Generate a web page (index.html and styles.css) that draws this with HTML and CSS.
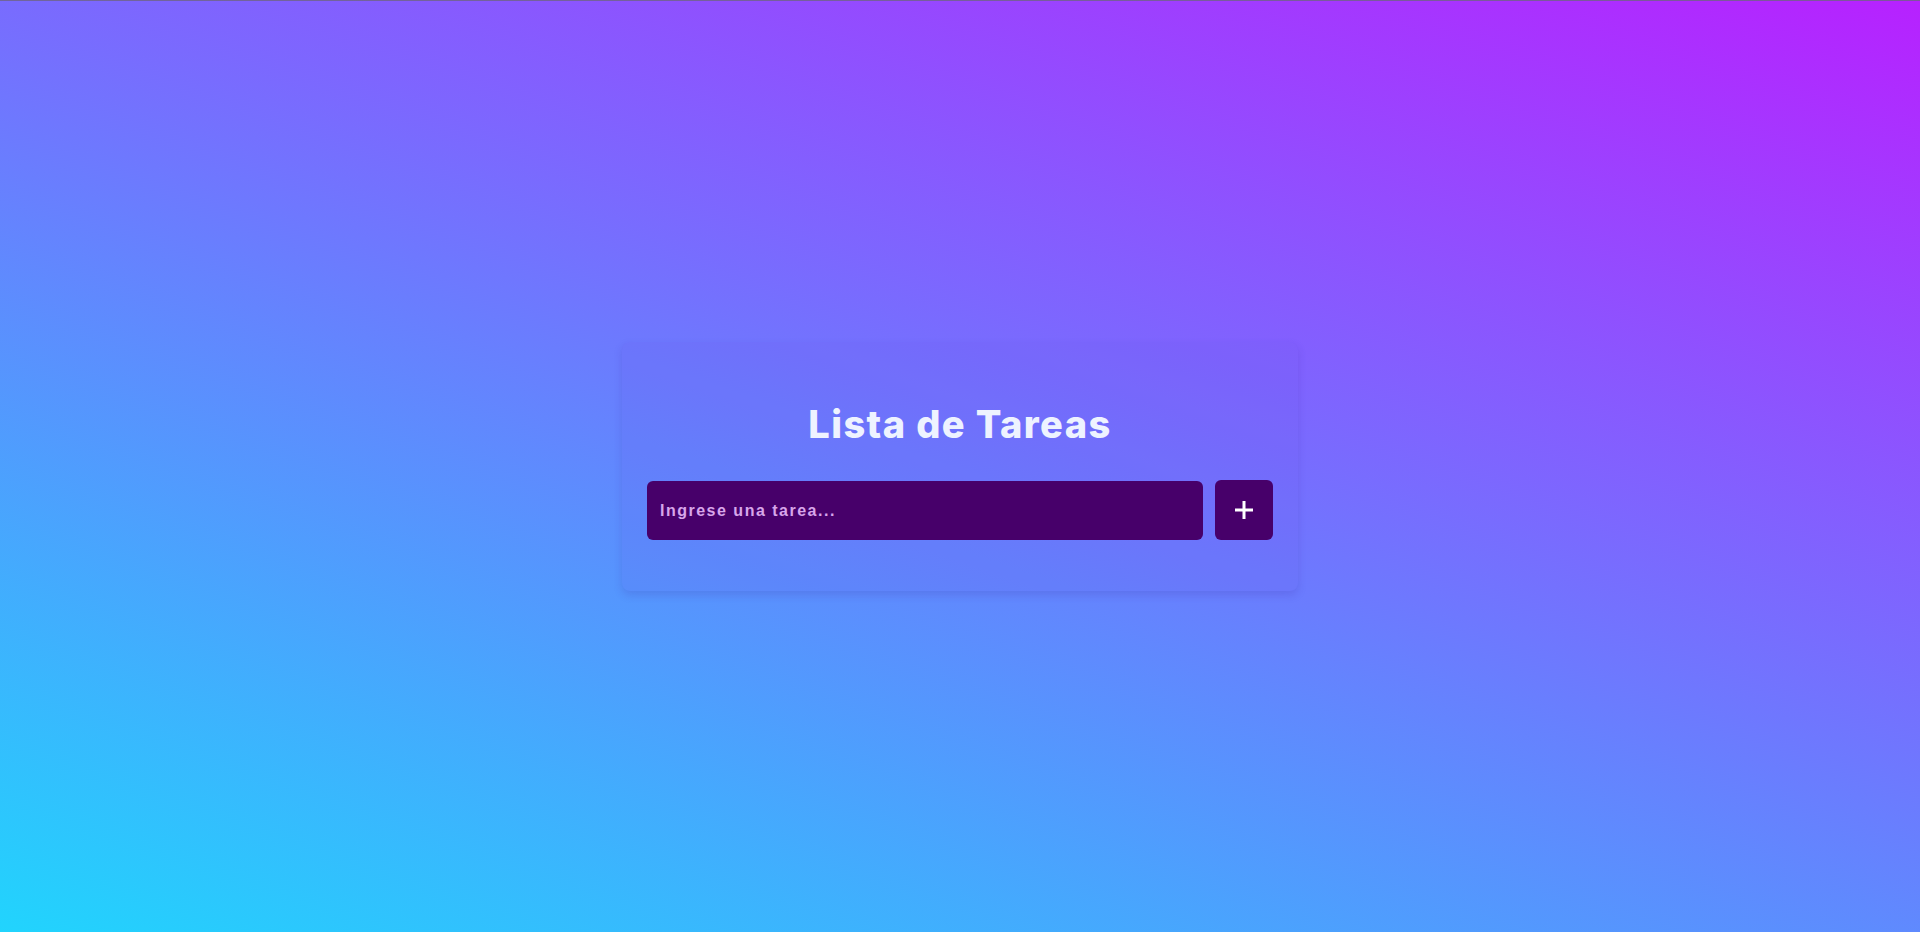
FILE: index.html
```html
<!DOCTYPE html>
<html lang="es">
<head>
<meta charset="utf-8">
<title>Lista de Tareas</title>
<link rel="stylesheet" href="styles.css">
</head>
<body>
  <main class="container">
    <h1 class="title">Lista de Tareas</h1>
    <form class="task-form" onsubmit="return false;">
      <input class="task-input" type="text" placeholder="Ingrese una tarea...">
      <button class="add-btn" type="button" aria-label="Agregar">
        <svg width="20" height="20" viewBox="0 0 20 20" aria-hidden="true">
          <path d="M10 1V19M1 10H19" stroke="#ffffff" stroke-width="3" stroke-linecap="butt" fill="none"/>
        </svg>
      </button>
    </form>
    <ul class="task-list"></ul>
  </main>
</body>
</html>
```
FILE: styles.css
```css
* { box-sizing: border-box; }
html, body { height: 100%; }
body {
  margin: 0;
  min-height: 100vh;
  display: flex;
  align-items: center;
  justify-content: center;
  background-color: #21d4fd;
  background-image: linear-gradient(19deg, #21d4fd 0%, #b721ff 100%);
  border-top: 1px solid rgba(110, 100, 130, 0.8);
  font-family: "Liberation Sans", Arial, sans-serif;
}
.container {
  width: 676px;
  padding: 24px 25px 26px;
  background: rgba(110, 80, 230, 0.12);
  border-radius: 8px;
  box-shadow: 0 4px 8px rgba(60, 40, 160, 0.18);
  display: flex;
  flex-direction: column;
}
.title {
  margin: 34px 0 33px;
  text-align: center;
  font-family: Inter, "Open Sans", sans-serif;
  font-weight: 800;
  font-size: 38px;
  letter-spacing: 1.4px;
  line-height: 48px;
  color: #eef3ff;
}
.task-form {
  display: flex;
  gap: 12px;
}
.task-input {
  flex: 1;
  height: 59px;
  border: none;
  outline: none;
  border-radius: 6px;
  background: #47006a;
  padding: 0 13px;
  font-family: "Liberation Sans", Arial, sans-serif;
  font-weight: 700;
  font-size: 16px;
  letter-spacing: 1.5px;
  color: #ffffff;
}
.task-input::placeholder {
  color: #d8a6ea;
  opacity: 1;
}
.add-btn {
  width: 58px;
  height: 60px;
  margin-top: -1px;
  border: none;
  border-radius: 6px;
  background: #47006a;
  display: flex;
  align-items: center;
  justify-content: center;
  padding: 0;
  cursor: pointer;
}
.task-list {
  list-style: none;
  margin: 25px 0 0;
  padding: 0;
}
```
